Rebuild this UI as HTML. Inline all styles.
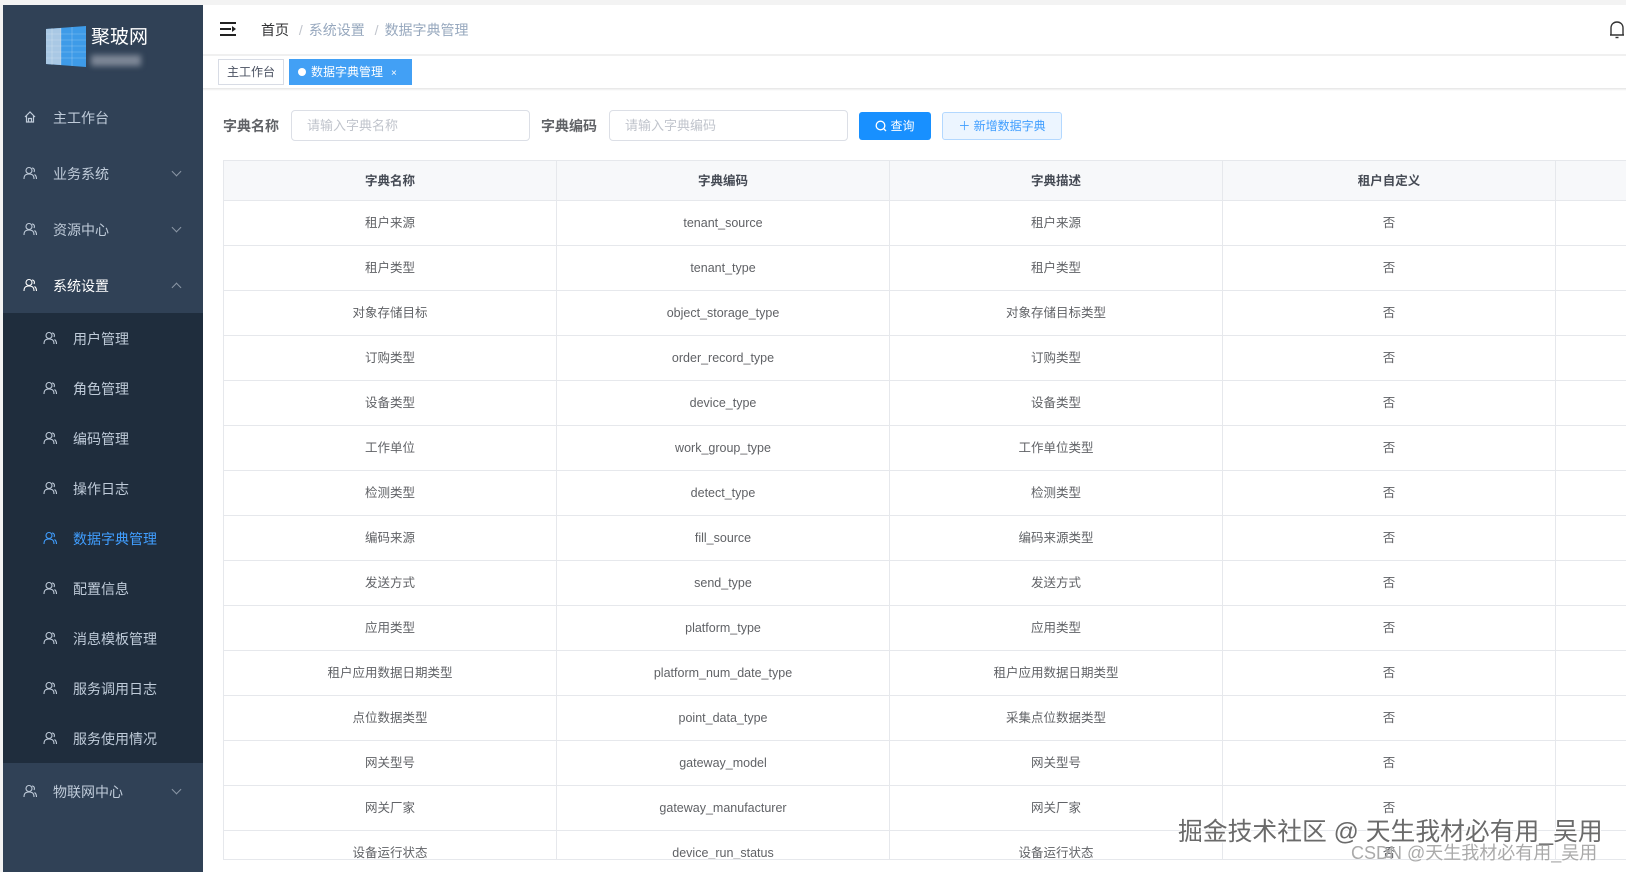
<!DOCTYPE html>
<html><head><meta charset="utf-8"><style>
*{margin:0;padding:0;box-sizing:border-box}
body{width:1626px;height:872px;overflow:hidden;background:#f3f3f3;font-family:"Liberation Sans","Noto Sans CJK SC",sans-serif;position:relative}
.abs{position:absolute}
#side{left:3px;top:5px;width:200px;height:867px;background:#304156}
.mi{position:absolute;left:0;width:200px;color:#bfcbd9;font-size:14px;line-height:20px}
.mi svg{position:absolute;top:2px}
.mi .t{position:absolute}
.arr{position:absolute;left:170px;top:4px;width:7px;height:7px;border-right:1px solid #8a96a5;border-bottom:1px solid #8a96a5;transform:rotate(45deg)}
.arr.up{transform:rotate(225deg);top:8px}
#sub{left:3px;top:313px;width:200px;height:450px;background:#1f2d3d}
#main{left:203px;top:5px;width:1423px;height:867px;background:#fff}
table{border-collapse:collapse;table-layout:fixed}
td,th{border:1px solid #e6e8ec;text-align:center;font-size:12.5px;line-height:18px;color:#606266;height:45px;font-weight:normal;white-space:nowrap;overflow:hidden;vertical-align:middle}
th{height:40px;background:#f7f8fa;color:#454a54;font-weight:bold}
tr.last td{vertical-align:top;padding-top:13px}
</style></head><body>
<div id="side" class="abs"></div>
<div id="sub" class="abs"></div>
<svg class="abs" style="left:46px;top:26px" width="40" height="41" viewBox="0 0 40 41">
<polygon points="0,3 40,0 40,41 0,38" fill="#3e9be8"/>
<polygon points="0,3 15,2 15,39 0,38" fill="#a9c8e4"/>
<g stroke="#ffffff" stroke-opacity=".35" stroke-width=".6"><line x1="0" y1="8" x2="40" y2="8"/><line x1="0" y1="14" x2="40" y2="14"/><line x1="0" y1="20" x2="40" y2="20"/><line x1="0" y1="26" x2="40" y2="26"/><line x1="0" y1="32" x2="40" y2="32"/><line x1="6" y1="2" x2="6" y2="39"/><line x1="15" y1="2" x2="15" y2="39"/><line x1="26" y1="1" x2="26" y2="40"/></g>
</svg>
<div class="abs" style="left:91px;top:27px;color:#fff;font-size:19px;line-height:22px">聚玻网</div>
<div class="abs" style="left:91px;top:55px;width:50px;height:11px;background:#7d8796;filter:blur(3px)"></div>
<div class="mi" style="left:3px;top:108px"><svg style="left:20px" width="14" height="14" viewBox="0 0 14 14" fill="none" stroke="#bfcbd9" stroke-width="1.2"><path d="M2 7 L7 2 L12 7 M3.5 5.5 V12 H10.5 V5.5 M5.5 12 V8.5 H8.5 V12"/></svg><span class="t" style="left:50px">主工作台</span></div>
<div class="mi" style="left:3px;top:164px"><svg style="left:20px" width="14" height="14" viewBox="0 0 14 14" fill="none" stroke="#bfcbd9" stroke-width="1.1"><circle cx="6" cy="4.5" r="3"/><path d="M1 13 C1 9 3 8 6 8 C9 8 11 9 11 13 M9 2 C11 2 12 4 11 6 M11.5 8.5 C13 9.5 13.5 11 13.5 13"/></svg><span class="t" style="left:50px">业务系统</span><i class="arr"></i></div>
<div class="mi" style="left:3px;top:220px"><svg style="left:20px" width="14" height="14" viewBox="0 0 14 14" fill="none" stroke="#bfcbd9" stroke-width="1.1"><circle cx="6" cy="4.5" r="3"/><path d="M1 13 C1 9 3 8 6 8 C9 8 11 9 11 13 M9 2 C11 2 12 4 11 6 M11.5 8.5 C13 9.5 13.5 11 13.5 13"/></svg><span class="t" style="left:50px">资源中心</span><i class="arr"></i></div>
<div class="mi" style="left:3px;top:276px;color:#fff"><svg style="left:20px" width="14" height="14" viewBox="0 0 14 14" fill="none" stroke="#fff" stroke-width="1.1"><circle cx="6" cy="4.5" r="3"/><path d="M1 13 C1 9 3 8 6 8 C9 8 11 9 11 13 M9 2 C11 2 12 4 11 6 M11.5 8.5 C13 9.5 13.5 11 13.5 13"/></svg><span class="t" style="left:50px">系统设置</span><i class="arr up"></i></div>
<div class="mi" style="left:3px;top:782px"><svg style="left:20px" width="14" height="14" viewBox="0 0 14 14" fill="none" stroke="#bfcbd9" stroke-width="1.1"><circle cx="6" cy="4.5" r="3"/><path d="M1 13 C1 9 3 8 6 8 C9 8 11 9 11 13 M9 2 C11 2 12 4 11 6 M11.5 8.5 C13 9.5 13.5 11 13.5 13"/></svg><span class="t" style="left:50px">物联网中心</span><i class="arr"></i></div>
<div class="mi" style="left:3px;top:329px"><svg style="left:40px" width="14" height="14" viewBox="0 0 14 14" fill="none" stroke="#bfcbd9" stroke-width="1.1"><circle cx="6" cy="4.5" r="3"/><path d="M1 13 C1 9 3 8 6 8 C9 8 11 9 11 13 M9 2 C11 2 12 4 11 6 M11.5 8.5 C13 9.5 13.5 11 13.5 13"/></svg><span class="t" style="left:70px">用户管理</span></div>
<div class="mi" style="left:3px;top:379px"><svg style="left:40px" width="14" height="14" viewBox="0 0 14 14" fill="none" stroke="#bfcbd9" stroke-width="1.1"><circle cx="6" cy="4.5" r="3"/><path d="M1 13 C1 9 3 8 6 8 C9 8 11 9 11 13 M9 2 C11 2 12 4 11 6 M11.5 8.5 C13 9.5 13.5 11 13.5 13"/></svg><span class="t" style="left:70px">角色管理</span></div>
<div class="mi" style="left:3px;top:429px"><svg style="left:40px" width="14" height="14" viewBox="0 0 14 14" fill="none" stroke="#bfcbd9" stroke-width="1.1"><circle cx="6" cy="4.5" r="3"/><path d="M1 13 C1 9 3 8 6 8 C9 8 11 9 11 13 M9 2 C11 2 12 4 11 6 M11.5 8.5 C13 9.5 13.5 11 13.5 13"/></svg><span class="t" style="left:70px">编码管理</span></div>
<div class="mi" style="left:3px;top:479px"><svg style="left:40px" width="14" height="14" viewBox="0 0 14 14" fill="none" stroke="#bfcbd9" stroke-width="1.1"><circle cx="6" cy="4.5" r="3"/><path d="M1 13 C1 9 3 8 6 8 C9 8 11 9 11 13 M9 2 C11 2 12 4 11 6 M11.5 8.5 C13 9.5 13.5 11 13.5 13"/></svg><span class="t" style="left:70px">操作日志</span></div>
<div class="mi" style="left:3px;top:529px;color:#409eff"><svg style="left:40px" width="14" height="14" viewBox="0 0 14 14" fill="none" stroke="#409eff" stroke-width="1.1"><circle cx="6" cy="4.5" r="3"/><path d="M1 13 C1 9 3 8 6 8 C9 8 11 9 11 13 M9 2 C11 2 12 4 11 6 M11.5 8.5 C13 9.5 13.5 11 13.5 13"/></svg><span class="t" style="left:70px">数据字典管理</span></div>
<div class="mi" style="left:3px;top:579px"><svg style="left:40px" width="14" height="14" viewBox="0 0 14 14" fill="none" stroke="#bfcbd9" stroke-width="1.1"><circle cx="6" cy="4.5" r="3"/><path d="M1 13 C1 9 3 8 6 8 C9 8 11 9 11 13 M9 2 C11 2 12 4 11 6 M11.5 8.5 C13 9.5 13.5 11 13.5 13"/></svg><span class="t" style="left:70px">配置信息</span></div>
<div class="mi" style="left:3px;top:629px"><svg style="left:40px" width="14" height="14" viewBox="0 0 14 14" fill="none" stroke="#bfcbd9" stroke-width="1.1"><circle cx="6" cy="4.5" r="3"/><path d="M1 13 C1 9 3 8 6 8 C9 8 11 9 11 13 M9 2 C11 2 12 4 11 6 M11.5 8.5 C13 9.5 13.5 11 13.5 13"/></svg><span class="t" style="left:70px">消息模板管理</span></div>
<div class="mi" style="left:3px;top:679px"><svg style="left:40px" width="14" height="14" viewBox="0 0 14 14" fill="none" stroke="#bfcbd9" stroke-width="1.1"><circle cx="6" cy="4.5" r="3"/><path d="M1 13 C1 9 3 8 6 8 C9 8 11 9 11 13 M9 2 C11 2 12 4 11 6 M11.5 8.5 C13 9.5 13.5 11 13.5 13"/></svg><span class="t" style="left:70px">服务调用日志</span></div>
<div class="mi" style="left:3px;top:729px"><svg style="left:40px" width="14" height="14" viewBox="0 0 14 14" fill="none" stroke="#bfcbd9" stroke-width="1.1"><circle cx="6" cy="4.5" r="3"/><path d="M1 13 C1 9 3 8 6 8 C9 8 11 9 11 13 M9 2 C11 2 12 4 11 6 M11.5 8.5 C13 9.5 13.5 11 13.5 13"/></svg><span class="t" style="left:70px">服务使用情况</span></div>

<div id="main" class="abs"></div>
<div class="abs" style="left:203px;top:54px;width:1423px;height:2px;background:#f0f0f0"></div>
<svg class="abs" style="left:220px;top:22px" width="17" height="14" viewBox="0 0 17 14"><g fill="#222"><rect x="0" y="0" width="16" height="2"/><rect x="0" y="6" width="11" height="2"/><rect x="0" y="12" width="16" height="2"/><polygon points="12,4 16,7 12,10"/></g></svg>
<div class="abs" style="left:261px;top:21px;font-size:14px;line-height:18px;color:#303133">首页 <span style="color:#c0c4cc;margin:0 6px">/</span><span style="color:#97a8be">系统设置</span> <span style="color:#c0c4cc;margin:0 6px">/</span><span style="color:#97a8be">数据字典管理</span></div>
<svg class="abs" style="left:1609px;top:20px" width="16" height="20" viewBox="0 0 16 20" fill="none" stroke="#333" stroke-width="1.4"><path d="M2 15 V8 C2 4 5 2 8 2 C11 2 14 4 14 8 V15 Z M1 15 H15"/><path d="M6.5 17.5 H9.5"/></svg>
<div class="abs" style="left:203px;top:88px;width:1423px;height:3px;background:linear-gradient(#e4e4e4,#fff)"></div>
<div class="abs" style="left:218px;top:59px;width:66px;height:26px;border:1px solid #d8dce5;font-size:12px;line-height:24px;text-align:center;color:#495060">主工作台</div>
<div class="abs" style="left:289px;top:59px;width:123px;height:26px;background:#42a0f5;color:#fff;font-size:12px;line-height:26px;padding-left:9px"><span style="display:inline-block;width:8px;height:8px;border-radius:50%;background:#fff;margin-right:5px;vertical-align:0"></span>数据字典管理<span style="margin-left:8px;font-size:10px">×</span></div>
<div class="abs" style="left:223px;top:116px;font-size:14px;font-weight:bold;color:#606266">字典名称</div>
<div class="abs" style="left:291px;top:110px;width:239px;height:31px;border:1px solid #dcdfe6;border-radius:4px;font-size:13px;color:#c0c4cc;line-height:29px;padding-left:15px">请输入字典名称</div>
<div class="abs" style="left:541px;top:116px;font-size:14px;font-weight:bold;color:#606266">字典编码</div>
<div class="abs" style="left:609px;top:110px;width:239px;height:31px;border:1px solid #dcdfe6;border-radius:4px;font-size:13px;color:#c0c4cc;line-height:29px;padding-left:15px">请输入字典编码</div>
<div class="abs" style="left:859px;top:112px;width:72px;height:28px;background:#1890ff;border-radius:3px;color:#fff;font-size:12px;line-height:28px;text-align:center"><svg width="12" height="12" viewBox="0 0 12 12" style="vertical-align:-2px;margin-right:3px" fill="none" stroke="#fff" stroke-width="1.3"><circle cx="5.5" cy="5.5" r="4.3"/><path d="M8.7 8.7 L11 11"/></svg>查询</div>
<div class="abs" style="left:942px;top:112px;width:120px;height:28px;background:#ecf5ff;border:1px solid #b3d8ff;border-radius:3px;color:#409eff;font-size:12px;line-height:26px;text-align:center">＋ 新增数据字典</div>
<div class="abs" style="left:223px;top:160px;width:1403px;height:700px;overflow:hidden;border-bottom:1px solid #e6e8ec">
<table style="width:1700px">
<colgroup><col style="width:333px"><col style="width:333px"><col style="width:333px"><col style="width:333px"><col style="width:368px"></colgroup>
<tr><th>字典名称</th><th>字典编码</th><th>字典描述</th><th>租户自定义</th><th></th></tr>
<tr><td>租户来源</td><td>tenant_source</td><td>租户来源</td><td>否</td><td></td></tr>
<tr><td>租户类型</td><td>tenant_type</td><td>租户类型</td><td>否</td><td></td></tr>
<tr><td>对象存储目标</td><td>object_storage_type</td><td>对象存储目标类型</td><td>否</td><td></td></tr>
<tr><td>订购类型</td><td>order_record_type</td><td>订购类型</td><td>否</td><td></td></tr>
<tr><td>设备类型</td><td>device_type</td><td>设备类型</td><td>否</td><td></td></tr>
<tr><td>工作单位</td><td>work_group_type</td><td>工作单位类型</td><td>否</td><td></td></tr>
<tr><td>检测类型</td><td>detect_type</td><td>检测类型</td><td>否</td><td></td></tr>
<tr><td>编码来源</td><td>fill_source</td><td>编码来源类型</td><td>否</td><td></td></tr>
<tr><td>发送方式</td><td>send_type</td><td>发送方式</td><td>否</td><td></td></tr>
<tr><td>应用类型</td><td>platform_type</td><td>应用类型</td><td>否</td><td></td></tr>
<tr><td>租户应用数据日期类型</td><td>platform_num_date_type</td><td>租户应用数据日期类型</td><td>否</td><td></td></tr>
<tr><td>点位数据类型</td><td>point_data_type</td><td>采集点位数据类型</td><td>否</td><td></td></tr>
<tr><td>网关型号</td><td>gateway_model</td><td>网关型号</td><td>否</td><td></td></tr>
<tr><td>网关厂家</td><td>gateway_manufacturer</td><td>网关厂家</td><td>否</td><td></td></tr>
<tr class="last"><td>设备运行状态</td><td>device_run_status</td><td>设备运行状态</td><td>否</td><td></td></tr>
</table></div>
<div class="abs" style="left:1178px;top:819px;font-size:24.8px;line-height:28px;color:#6a6a6a;text-shadow:1px 1px 0 #fff,-1px -1px 0 #fff,1px -1px 0 #fff,-1px 1px 0 #fff;white-space:nowrap">掘金技术社区 @ 天生我材必有用_吴用</div>
<div class="abs" style="left:1351px;top:843px;font-size:18px;line-height:20px;color:#aaa;white-space:nowrap">CSDN @天生我材必有用_吴用</div>
</body></html>
